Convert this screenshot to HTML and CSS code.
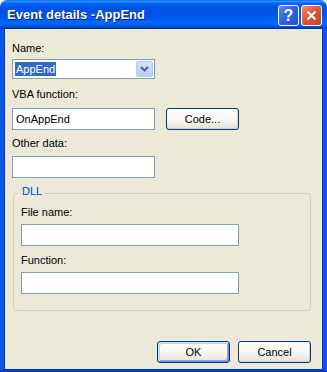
FILE: index.html
```html
<!DOCTYPE html>
<html lang="en">

<head>
    <meta charset="UTF-8">
    <meta name="viewport" content="width=device-width, initial-scale=1.0">
    <title>Event details -AppEnd</title>
    <link rel="stylesheet" href="styles.css">
</head>

<body>
    <!-- Dialog Window -->
    <div class="window">
        <div class="titlebar">
            <span class="title">Event details -AppEnd</span>
            <div class="caption-buttons">
                <span class="cap help">?</span>
                <span class="cap close">
                    <svg width="11" height="11" viewBox="0 0 11 11">
                        <path d="M1.5 1.5 L9.5 9.5 M9.5 1.5 L1.5 9.5" stroke="#fff" stroke-width="2" fill="none" />
                    </svg>
                </span>
            </div>
        </div>

        <div class="frame">
            <div class="content">
                <label class="lbl">Name:</label>
                <div class="combo">
                    <span class="combo-text"><span class="sel">AppEnd</span></span>
                    <span class="combo-btn">
                        <svg width="9" height="6" viewBox="0 0 9 6">
                            <path d="M1 1 L4.5 4.5 L8 1" stroke="#4d6185" stroke-width="2" fill="none" />
                        </svg>
                    </span>
                </div>

                <label class="lbl lbl-vba">VBA function:</label>
                <div class="row">
                    <input class="field" type="text" value="OnAppEnd">
                    <button class="btn code">Code...</button>
                </div>

                <label class="lbl lbl-other">Other data:</label>
                <input class="field" type="text">

                <!-- DLL Group -->
                <fieldset class="group">
                    <legend>DLL</legend>
                    <label class="lbl">File name:</label>
                    <input class="field wide" type="text">
                    <label class="lbl lbl-func">Function:</label>
                    <input class="field wide" type="text">
                </fieldset>

                <div class="actions">
                    <button class="btn default">OK</button>
                    <button class="btn">Cancel</button>
                </div>
            </div>
        </div>
    </div>
</body>

</html>
```

FILE: styles.css
```css
/* General Styles */
* {
    margin: 0;
    padding: 0;
    box-sizing: border-box;
    font-family: "Liberation Sans", Arial, sans-serif;
}

body {
    background: #fff;
    width: 327px;
    height: 372px;
    overflow: hidden;
}

/* Window */
.window {
    display: flex;
    flex-direction: column;
    width: 327px;
    height: 372px;
}

.titlebar {
    height: 29px;
    display: flex;
    align-items: flex-start;
    justify-content: space-between;
    border-radius: 7px 7px 0 0;
    background: linear-gradient(#0058ee 0%, #3593ff 4%, #288eff 6%, #127dff 8%, #036ffc 10%, #0262ee 14%, #0057e5 20%, #0054e3 24%, #0055eb 56%, #005bf5 66%, #026afe 76%, #0062ef 86%, #0052d6 92%, #0040ab 96%, #003092 100%);
}

.title {
    margin: 7px 0 0 7px;
    color: #fff;
    font-size: 13px;
    font-weight: bold;
    line-height: 15px;
    text-shadow: 1px 1px 0 #0a1883;
}

.caption-buttons {
    display: flex;
    gap: 2px;
    margin: 5px 5px 0 0;
}

.cap {
    width: 21px;
    height: 21px;
    display: flex;
    align-items: center;
    justify-content: center;
    border: 1px solid #fff;
    border-radius: 3px;
    color: #fff;
}

.help {
    background: linear-gradient(135deg, #5a8cf5 0%, #2e63e6 45%, #1d4fd6 100%);
    font-size: 16px;
    font-weight: bold;
    line-height: 1;
}

.close {
    background: linear-gradient(135deg, #f08a6a 0%, #e0583a 45%, #c8401f 100%);
}

/* Frame */
.frame {
    flex: 1;
    background: #ece9d8;
    border-left: 4px solid #0a55e6;
    border-right: 4px solid #0a55e6;
    border-bottom: 3px solid #0537d0;
    box-shadow: inset 1px 0 0 #0831d9, inset -1px 0 0 #0831d9;
}

.content {
    padding: 13px 12px 0 8px;
    font-size: 11px;
    color: #000;
}

.lbl {
    display: block;
    font-size: 11px;
    line-height: 13px;
}

.lbl-vba {
    margin-top: 9px;
}

.lbl-other {
    margin-top: 7px;
}

.lbl-func {
    margin-top: 8px;
}

/* Combo */
.combo {
    display: flex;
    width: 143px;
    height: 20px;
    margin-top: 4px;
    background: #fff;
    border: 1px solid #7f9db9;
}

.combo-text {
    flex: 1;
    padding: 2px 0 0 2px;
}

.sel {
    display: inline-block;
    padding: 0 1px;
    height: 14px;
    line-height: 14px;
    background: #316ac5;
    color: #fff;
    font-size: 11px;
}

.combo-btn {
    width: 17px;
    margin: 1px;
    display: flex;
    align-items: center;
    justify-content: center;
    border: 1px solid #b9cbf3;
    border-radius: 2px;
    background: linear-gradient(#d4e1fc, #b8cdf9);
}

/* Inputs */
.row {
    display: flex;
    margin-top: 7px;
}

.field {
    display: block;
    width: 143px;
    height: 22px;
    margin-top: 6px;
    padding: 0 3px;
    border: 1px solid #7f9db9;
    background: #fff;
    font-size: 11px;
    color: #000;
    outline: none;
}

.row .field {
    margin-top: 0;
}

.field.wide {
    width: 218px;
    margin-top: 5px;
}

/* Buttons */
.btn {
    width: 73px;
    height: 22px;
    border: 1px solid #003c74;
    border-radius: 3px;
    background: linear-gradient(#ffffff 0%, #f6f5f0 60%, #e3e0d6 100%);
    box-shadow: inset -1px -1px 0 #d6d0c5;
    font-size: 11px;
    color: #000;
}

.code {
    margin-left: 11px;
}

.default {
    box-shadow: inset 1px 1px 0 #cee7ff, inset -1px -1px 0 #6982ee, inset 2px 2px 0 #bcd4f6, inset -2px -2px 0 #89ade4;
}

/* Group */
.group {
    margin: 7px 0 0 1px;
    min-width: 0;
    padding: 5px 7px 16px 7px;
    border: 1px solid #d0d0bf;
    border-radius: 4px;
}

.group legend {
    margin-left: 0;
    padding: 0 2px 3px 1px;
    color: #0046d5;
    font-size: 11px;
    line-height: 13px;
}

.actions {
    display: flex;
    justify-content: flex-end;
    gap: 8px;
    margin-top: 30px;
}
```
